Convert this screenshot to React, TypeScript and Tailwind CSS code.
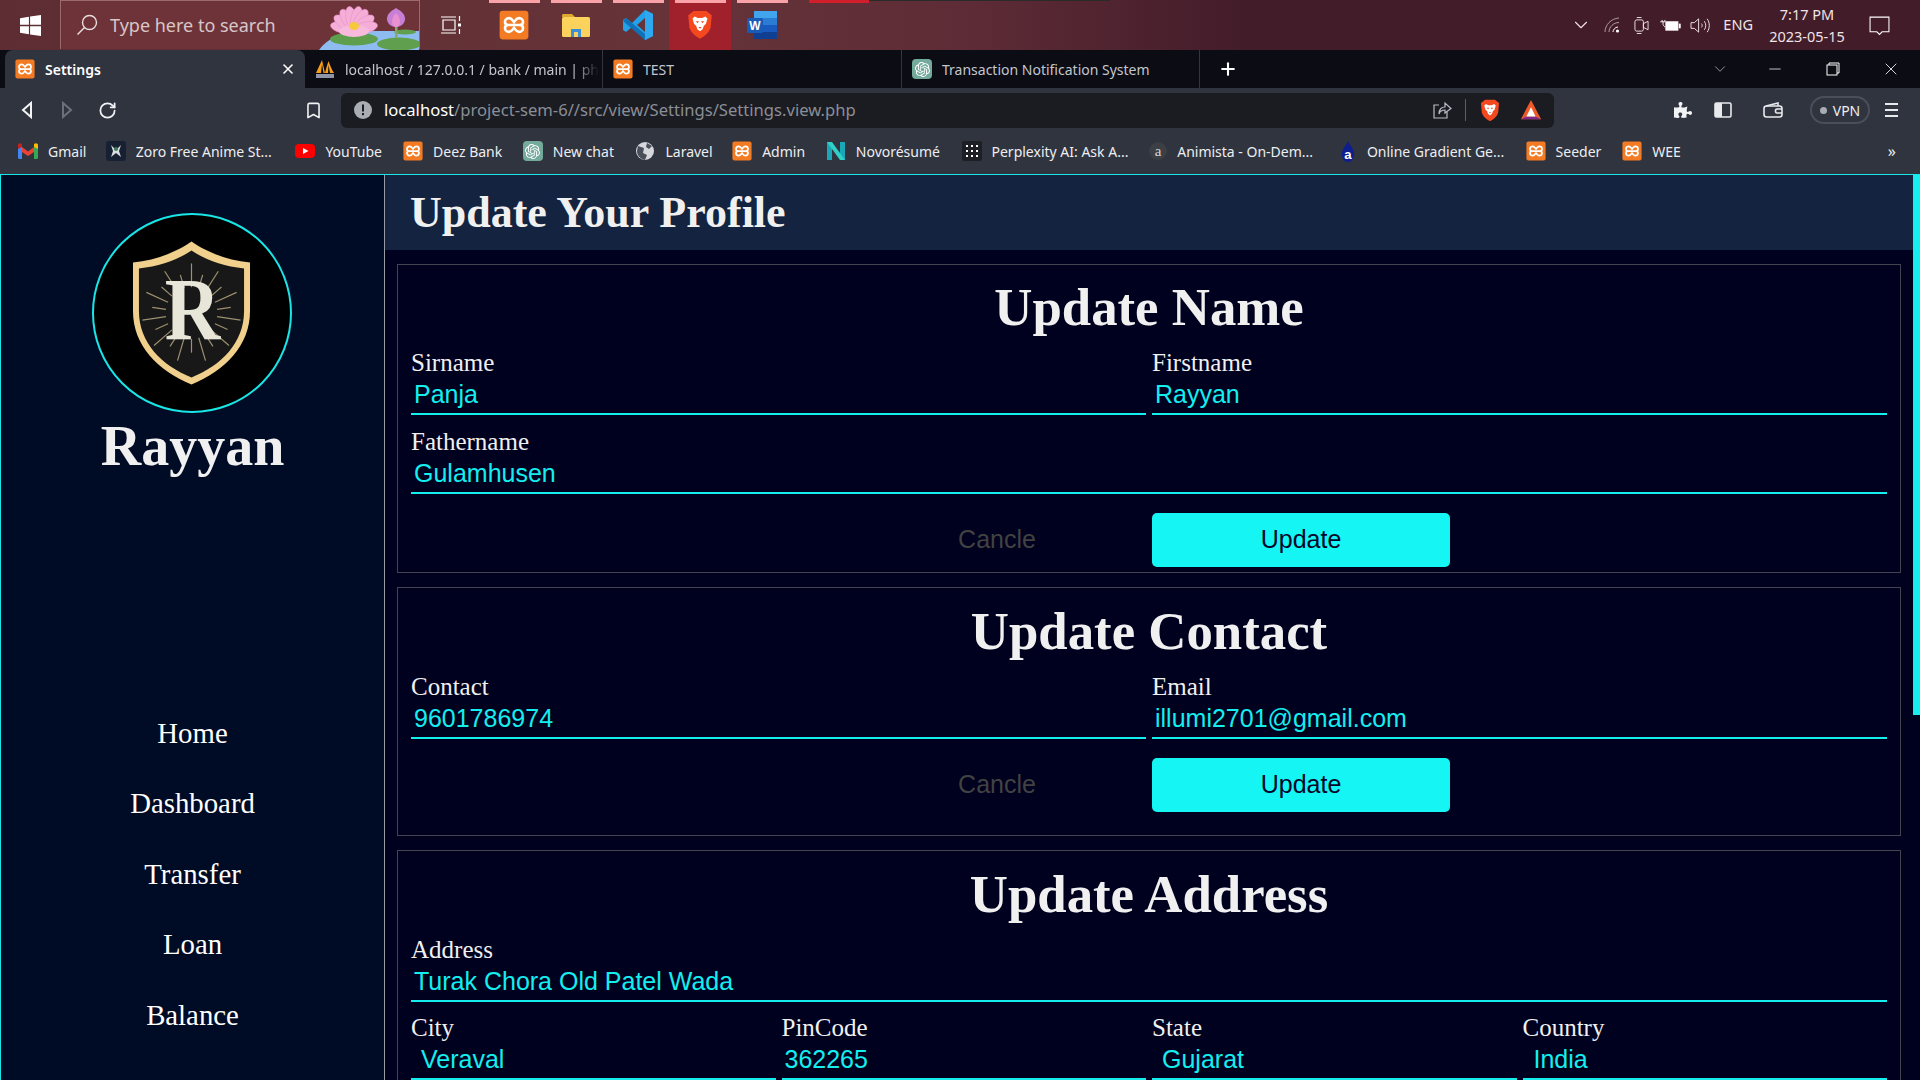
import { Bookmark, ChevronDown, Minus, Plus, RotateCw, X } from 'lucide-react';
import { SiOpenai } from 'react-icons/si';
import { FaPuzzlePiece } from 'react-icons/fa';

const Xampp = ({ size = 20 }: { size?: number }) => (
  <svg viewBox="0 0 24 24" width={size} height={size} className="shrink-0">
    <rect x="0.5" y="0.5" width="23" height="23" rx="2.5" fill="#f37b23" />
    <path
      d="M8 6.5C6 6.5 4.8 8 4.8 9.5 4.8 11 6 12 7.5 12 6 12 4.8 13 4.8 14.5 4.8 16 6 17.5 8 17.5 10 17.5 11 15.5 12 14.4 13 15.5 14 17.5 16 17.5 18 17.5 19.2 16 19.2 14.5 19.2 13 18 12 16.5 12 18 12 19.2 11 19.2 9.5 19.2 8 18 6.5 16 6.5 14 6.5 13 8.5 12 9.6 11 8.5 10 6.5 8 6.5ZM7.5 12H16.5"
      fill="none"
      stroke="#fff"
      strokeWidth="2.1"
    />
  </svg>
);

const OpenAiIcon = () => (
  <div className="flex size-[20px] shrink-0 items-center justify-center rounded-[4px] bg-[#74aa9c]">
    <SiOpenai className="size-[15px] text-white" />
  </div>
);

const BraveLion = ({ size = 24 }: { size?: number }) => (
  <svg viewBox="0 0 24 28" width={size} height={size * 1.15} className="shrink-0">
    <path d="M6 1H18L23 5 22 16C21 21 16 25 12 27 8 25 3 21 2 16L1 5Z" fill="#f4481f" />
    <path
      d="M7 6 10 7.5H14L17 6 19 8 17.5 13 15.5 15 14.5 18 12 20 9.5 18 8.5 15 6.5 13 5 8Z"
      fill="#fff"
    />
    <path d="M8 10.5H11L9.8 12.5ZM13 10.5H16L14.2 12.5ZM10.5 16H13.5L12 17.5Z" fill="#f4481f" />
  </svg>
);

const Triangle = ({ size = 22 }: { size?: number }) => (
  <svg viewBox="0 0 24 24" width={size} height={size} className="shrink-0">
    <path d="M12 1 23 22H1Z" fill="#ef5a28" />
    <path d="M1 22 7 19H17L23 22Z" fill="#7a2a8c" />
    <path d="M12 9 17 19H7Z" fill="#fff" />
  </svg>
);

const Lotus = () => {
  const petals = [-78, -55, -32, -12, 12, 32, 55, 78];
  return (
    <svg viewBox="0 0 100 49" className="h-[49px] w-[100px] shrink-0 self-end">
      <path d="M0 49C8 38 20 32 40 30H100V49Z" fill="#8fbcf0" />
      <ellipse cx="35" cy="38" rx="24" ry="6.5" fill="#5d9f4c" />
      <ellipse cx="80" cy="43" rx="22" ry="6.5" fill="#5f9f4d" />
      <ellipse cx="86" cy="31" rx="11" ry="2.5" fill="#5f9f4d" />
      <rect x="76" y="20" width="2.5" height="17" fill="#8aa66a" />
      <path d="M77 7C72 10 68 13 68 18 68 23 73 26 77 26 81 26 86 23 86 18 86 13 82 10 77 7Z" fill="#c87fd6" />
      <path d="M77 12C74 15 73 18 73 21 73 24 75 26 77 26 79 26 81 24 81 21 81 18 80 15 77 12Z" fill="#ea8fd0" />
      {petals.map((angle) => (
        <ellipse
          key={angle}
          cx="35"
          cy="17"
          rx="5.5"
          ry="12"
          fill="#f5aed8"
          stroke="#e88cc4"
          strokeWidth="0.5"
          transform={`rotate(${angle} 35 29)`}
        />
      ))}
      <ellipse cx="35" cy="30" rx="15" ry="6" fill="#f7b9dc" />
      <ellipse cx="35" cy="25" rx="5" ry="4" fill="#f6c83c" />
    </svg>
  );
};

const TaskbarIcons = [
  {
    name: 'xampp',
    icon: <Xampp size={30} />,
  },
  {
    name: 'folder',
    icon: (
      <svg viewBox="0 0 28 24" width="28" height="24">
        <path d="M0 2.5C0 1.5 .7 1 1.5 1H10L13 4H0Z" fill="#e0a82e" />
        <rect y="4" width="28" height="20" rx="1.5" fill="#fbd35c" />
        <path d="M9 24V16H19V24H16V19H12V24Z" fill="#3a8fd6" />
      </svg>
    ),
  },
  {
    name: 'vscode',
    icon: (
      <svg viewBox="0 0 30 30" width="30" height="30">
        <path d="M22 0 30 4V26L22 30 9 17 3 22 0 20V10L3 8 9 13ZM22 8 14 15 22 22Z" fill="#23a2ea" />
        <path d="M22 0 30 4V26L22 30Z" fill="#2fa8f0" />
        <path d="M3 8 22 24V30L0 11Z" fill="#0f72b8" />
      </svg>
    ),
  },
  {
    name: 'brave',
    active: true,
    icon: <BraveLion size={26} />,
  },
  {
    name: 'word',
    icon: (
      <svg viewBox="0 0 30 30" width="30" height="30">
        <rect x="7" y="1" width="23" height="28" rx="2" fill="#2b7cd3" />
        <rect x="7" y="1" width="23" height="7" fill="#41a5ee" />
        <rect x="7" y="15" width="23" height="7" fill="#185abd" />
        <rect x="7" y="22" width="23" height="7" fill="#103f91" />
        <rect y="8" width="16" height="15" rx="1.5" fill="#1a5bb8" />
        <text x="8" y="20" textAnchor="middle" fontSize="12" fontWeight="700" fill="#fff" fontFamily="Liberation Sans, sans-serif">
          W
        </text>
      </svg>
    ),
  },
];

const Taskbar = () => {
  return (
    <div className="flex h-[50px] shrink-0 bg-[linear-gradient(90deg,#5e2d33_0%,#653338_35%,#5e2c36_50%,#431c2a_65%,#431c2a_100%)] font-['Noto_Sans',sans-serif] text-[#f0e4e6]">
      <div className="flex w-[60px] items-center justify-center">
        <svg viewBox="0 0 20 20" width="21" height="21">
          <path d="M0 3 8.5 1.7V9.4H0ZM9.6 1.5 20 0V9.4H9.6ZM0 10.6H8.5V18.3L0 17ZM9.6 10.6H20V20L9.6 18.5Z" fill="#fff" />
        </svg>
      </div>
      <div className="flex h-[49px] w-[360px] items-center border border-b-0 border-[#9a6a6d] bg-[#6e3338] pl-[14px]">
        <svg viewBox="0 0 24 24" width="24" height="24" fill="none" stroke="#eadfe0" strokeWidth="1.4">
          <circle cx="14.5" cy="9.5" r="7" />
          <path d="M9.5 14.5 2.5 21.5" />
        </svg>
        <span className="ml-[11px] text-[18px] text-[#d8c6c8]">Type here to search</span>
        <div className="ml-auto">
          <Lotus />
        </div>
      </div>
      <div className="flex w-[63px] items-center justify-center pr-[2px]">
        <svg viewBox="0 0 20 20" width="20" height="20" fill="none" stroke="#fff" strokeWidth="1.2">
          <path d="M0 2H15M0 18H15M2 5H14V15H2ZM18.5 1V6M18.5 14V19" />
          <rect x="17" y="8.5" width="3" height="3" fill="#fff" stroke="none" />
        </svg>
      </div>
      {TaskbarIcons.map((item) => (
        <div key={item.name} className={`flex w-[62px] flex-col items-center ${item.active ? 'bg-[#a0212c]' : ''}`}>
          <div className="h-[3px] w-[51px] bg-[#f9a3a8]"></div>
          <div className="flex flex-1 items-center justify-center pb-[3px]">{item.icon}</div>
        </div>
      ))}
      <div className="ml-[16px] h-[3px] w-[60px] bg-[#d01f2b]"></div>
      <div className="h-[1px] w-[241px] bg-[#2a2a2a]"></div>
      <div className="ml-auto flex items-center pr-[30px]">
        <ChevronDown className="mr-[12px] size-[22px] text-[#f0e4e6]" strokeWidth={1.2} />
        <svg viewBox="0 0 16 16" width="16" height="16" fill="none" stroke="#b09a9e" strokeWidth="1" className="mr-[14px]">
          <path d="M1 15C1 8 7 1.5 15 1M5 15C5 10 9.5 5.5 15 5.5" />
          <path d="M9 15C9 13 11 10 14 10" stroke="#fff" />
          <circle cx="13.5" cy="14" r="1.6" fill="#fff" stroke="none" />
        </svg>
        <svg viewBox="0 0 16 20" width="15" height="19" fill="none" stroke="#f0e4e6" strokeWidth="1" className="mr-[11px]">
          <rect x="1" y="4" width="9" height="12" rx="2" />
          <path d="M10 8 15 5.5V14.5L10 12ZM3 1.5H8M3 18.5H8" />
        </svg>
        <svg viewBox="0 0 22 14" width="21" height="13" className="mr-[9px]">
          <path d="M0 3H5V1M2 1V3M3 3V6C3 7.5 5 7.5 5 9" fill="none" stroke="#fff" strokeWidth="1" />
          <rect x="6" y="3" width="13" height="9" fill="#fff" stroke="#fff" />
          <rect x="20" y="5" width="2" height="5" fill="#fff" />
        </svg>
        <svg viewBox="0 0 22 20" width="21" height="19" fill="none" stroke="#f0e4e6" strokeWidth="1" className="mr-[12px]">
          <path d="M1 7H4.5L9 3V17L4.5 13H1Z" />
          <path d="M12 8C13 9 13 11 12 12M15 5.5C17 8 17 12 15 14.5M18 3C21 7 21 13 18 17" />
        </svg>
        <span className="text-[14.5px]">ENG</span>
        <div className="ml-[12px] flex w-[84px] flex-col items-center text-[14.5px] leading-[22px]">
          <span>7:17 PM</span>
          <span>2023-05-15</span>
        </div>
        <svg viewBox="0 0 20 20" width="21" height="21" fill="none" stroke="#fff" strokeWidth="1" className="ml-[20px]">
          <path d="M1 2H19V16H12.5L10 18.5 7.5 16H1Z" />
        </svg>
      </div>
    </div>
  );
};

const PmaIcon = () => (
  <svg viewBox="0 0 20 20" width="20" height="20" className="shrink-0">
    <path d="M1 14C3 10 5 5 7 1 8 5 9 10 10 14ZM10 14C11 10 12 6 13.5 2 15 6 17 11 19 14Z" fill="#f89c1c" />
    <path d="M6 14 7 5 8.5 14ZM13 14 13.5 6 15 14Z" fill="#0b0c14" />
    <rect x="1" y="15" width="18" height="4" fill="#8f94a8" />
  </svg>
);

const inactiveTabs = [
  { title: 'localhost / 127.0.0.1 / bank / main | ph', icon: <PmaIcon />, width: 'w-[298px]', fade: true },
  { title: 'TEST', icon: <Xampp />, width: 'w-[299px]' },
  { title: 'Transaction Notification System', icon: <OpenAiIcon />, width: 'w-[298px]' },
];

const TabBar = () => {
  return (
    <div className="flex h-[38px] shrink-0 items-end bg-[#0b0c14] pl-[5px] font-['Noto_Sans',sans-serif] text-[14px]">
      <div className="flex h-[38px] w-[300px] items-center rounded-t-[8px] bg-[#30343f] pl-[10px] pr-[9px] font-semibold text-white">
        <Xampp />
        <span className="ml-[10px]">Settings</span>
        <X className="ml-auto size-[16px]" strokeWidth={2.4} />
      </div>
      {inactiveTabs.map((tab) => (
        <div key={tab.title} className={`flex h-[38px] items-center border-r border-[#33363f] pl-[10px] pr-[4px] text-[#c3c6ce] ${tab.width}`}>
          {tab.icon}
          <span
            className={`ml-[10px] whitespace-nowrap ${
              tab.fade ? '[mask-image:linear-gradient(90deg,#000_90%,transparent_100%)]' : ''
            }`}
          >
            {tab.title}
          </span>
        </div>
      ))}
      <div className="flex h-[38px] w-[56px] items-center justify-center">
        <Plus className="size-[20px] text-white" strokeWidth={2.5} />
      </div>
      <div className="ml-auto flex h-[38px] items-center text-white">
        <ChevronDown className="mr-[37px] size-[18px] text-[#b9bcc4]" strokeWidth={1} />
        <Minus className="mr-[42px] size-[18px]" strokeWidth={1} />
        <svg viewBox="0 0 14 14" width="14" height="14" fill="none" stroke="#fff" strokeWidth="1" className="mr-[41px]">
          <rect x="1" y="3" width="10" height="10" />
          <path d="M3 3V1H13V11H11" />
        </svg>
        <X className="mr-[19px] size-[20px]" strokeWidth={1} />
      </div>
    </div>
  );
};

const Toolbar = () => {
  return (
    <div className="flex h-[44px] shrink-0 items-center bg-[#30343f] pl-[7px] font-['Noto_Sans',sans-serif]">
      <div className="flex w-[40px] justify-center">
        <svg viewBox="0 0 14 18" width="14" height="18" fill="none" stroke="#f2f3f5" strokeWidth="2">
          <path d="M11 2 3 9 11 16Z" />
        </svg>
      </div>
      <div className="flex w-[40px] justify-center">
        <svg viewBox="0 0 14 18" width="14" height="18" fill="none" stroke="#6c7079" strokeWidth="2">
          <path d="M3 2 11 9 3 16Z" />
        </svg>
      </div>
      <div className="flex w-[40px] justify-center">
        <RotateCw className="size-[19px] text-[#f2f3f5]" strokeWidth={2.2} />
      </div>
      <div className="ml-[166px] flex w-[40px] justify-center">
        <Bookmark className="size-[19px] text-[#f2f3f5]" strokeWidth={2} />
      </div>
      <div className="ml-[8px] flex h-[35px] w-[1213px] items-center rounded-[6px] bg-[#1a1c22] pl-[13px] text-[16.6px]">
        <svg viewBox="0 0 18 18" width="18" height="18">
          <circle cx="9" cy="9" r="9" fill="#a9acb3" />
          <rect x="8" y="3.5" width="2" height="7" fill="#1a1c22" />
          <rect x="8" y="12" width="2" height="2.2" fill="#1a1c22" />
        </svg>
        <span className="ml-[12px] text-white">localhost</span>
        <span className="text-[#8b8e96]">/project-sem-6//src/view/Settings/Settings.view.php</span>
        <svg viewBox="0 0 20 20" width="20" height="20" fill="none" stroke="#b9bcc4" strokeWidth="1.2" className="ml-auto">
          <path d="M7 5H2V18H15V12" />
          <path d="M7 14C7 9 10 7 13 7V3L19 8.5 13 13V10C10 10 8 11 7 14Z" />
        </svg>
        <div className="ml-[13px] h-[22px] w-px bg-[#5c5f68]"></div>
        <div className="ml-[14px]">
          <BraveLion size={20} />
        </div>
        <div className="ml-[20px] mr-[12px]">
          <Triangle />
        </div>
      </div>
      <div className="ml-[120px] flex items-center">
        <FaPuzzlePiece className="size-[18px] text-[#f2f3f5]" />
        <svg viewBox="0 0 18 16" width="18" height="16" className="ml-[22px]">
          <rect x="1" y="1" width="16" height="14" rx="1.5" fill="none" stroke="#e8e9ec" strokeWidth="1.6" />
          <rect x="1" y="1" width="7" height="14" fill="#e8e9ec" />
        </svg>
        <svg viewBox="0 0 20 16" width="20" height="16" fill="none" stroke="#e8e9ec" strokeWidth="1.6" className="ml-[31px]">
          <path d="M3 4 15 1V4" />
          <rect x="1" y="4" width="18" height="11" rx="2.5" />
          <path d="M19 7H14C12 7 12 11 14 11H19" />
        </svg>
        <div className="ml-[27px] flex h-[28px] w-[60px] items-center justify-center gap-[6px] rounded-full border-2 border-[#4b4f5b] text-[14px] text-[#eceef2]">
          <div className="size-[7px] rounded-full bg-[#a9acb3]"></div>
          VPN
        </div>
        <div className="ml-[15px] flex w-[13px] flex-col gap-[4px]">
          <div className="h-[2px] bg-[#e8e9ec]"></div>
          <div className="h-[2px] bg-[#e8e9ec]"></div>
          <div className="h-[2px] bg-[#e8e9ec]"></div>
        </div>
      </div>
    </div>
  );
};

const bookmarks = [
  {
    name: 'Gmail',
    width: 'w-[37px]',
    icon: (
      <svg viewBox="0 0 20 16" width="20" height="16" className="shrink-0">
        <path d="M0 2 4 4V16H1.5C.7 16 0 15.3 0 14.5Z" fill="#4285f4" />
        <path d="M20 2 16 4V16H18.5C19.3 16 20 15.3 20 14.5Z" fill="#34a853" />
        <path d="M4 4 10 8.5 16 4V9L10 13 4 9Z" fill="#ea4335" />
        <path d="M0 2C0 .5 2 -.5 3.5 .7L4 1V4L0 6Z" fill="#c5221f" />
        <path d="M20 2C20 .5 18 -.5 16.5 .7L16 1V4L20 6Z" fill="#fbbc04" />
      </svg>
    ),
  },
  {
    name: 'Zoro Free Anime St...',
    width: 'w-[139px]',
    icon: (
      <svg viewBox="0 0 20 20" width="20" height="20" className="shrink-0">
        <rect width="20" height="20" rx="3" fill="#172033" />
        <path d="M5 4 10 9 15 4 13 10 15 16 10 12 5 16 7 10Z" fill="#d9dde2" />
        <circle cx="10" cy="8" r="2" fill="#3c7a55" />
      </svg>
    ),
  },
  {
    name: 'YouTube',
    width: 'w-[57px]',
    icon: (
      <svg viewBox="0 0 20 20" width="20" height="20" className="shrink-0">
        <rect y="3" width="20" height="14" rx="4" fill="#f00" />
        <path d="M8 7 13.5 10 8 13Z" fill="#fff" />
      </svg>
    ),
  },
  { name: 'Deez Bank', width: 'w-[69px]', icon: <Xampp /> },
  { name: 'New chat', width: 'w-[62px]', icon: <OpenAiIcon /> },
  {
    name: 'Laravel',
    width: 'w-[46px]',
    icon: (
      <svg viewBox="0 0 20 20" width="20" height="20" className="shrink-0">
        <circle cx="10" cy="10" r="9" fill="#d5d7dc" />
        <path d="M3 5 9 7 8 12 12 14 10 19C5 18 2 14 2 10ZM12 2 17 5 14 8 11 6Z" fill="#4a4e59" />
      </svg>
    ),
  },
  { name: 'Admin', width: 'w-[43px]', icon: <Xampp /> },
  {
    name: 'Novorésumé',
    width: 'w-[85px]',
    icon: (
      <svg viewBox="0 0 20 20" width="20" height="20" className="shrink-0">
        <path d="M1 1H6V19H1Z" fill="#1aa7b8" />
        <path d="M14 1H19V19H14Z" fill="#1aa7b8" />
        <path d="M1 1H6L19 19H14Z" fill="#2fd0c8" />
      </svg>
    ),
  },
  {
    name: 'Perplexity AI: Ask A...',
    width: 'w-[137px]',
    icon: (
      <svg viewBox="0 0 20 20" width="20" height="20" className="shrink-0">
        <rect width="20" height="20" rx="2" fill="#1d1f24" />
        {[5, 10, 15].map((y) =>
          [5, 10, 15].map((x) => <rect key={`${x}-${y}`} x={x - 1} y={y - 1} width="2" height="2" fill="#fff" />),
        )}
      </svg>
    ),
  },
  {
    name: 'Animista - On-Dem...',
    width: 'w-[141px]',
    icon: (
      <div className="flex size-[18px] shrink-0 items-center justify-center rounded-full bg-[#3c3f44] font-['Liberation_Serif',serif] text-[15px] leading-none text-[#d5d7dc]">
        a
      </div>
    ),
  },
  {
    name: 'Online Gradient Ge...',
    width: 'w-[138px]',
    icon: (
      <svg viewBox="0 0 20 24" width="18" height="21" className="shrink-0">
        <path d="M10 0C8 5 3 9 3 15 3 20 6 24 10 24 14 24 17 20 17 15 17 9 12 5 10 0Z" fill="#0d1f8f" />
        <text x="10" y="21" textAnchor="middle" fontSize="15" fontWeight="700" fill="#fff" fontFamily="Liberation Sans, sans-serif">
          a
        </text>
      </svg>
    ),
  },
  { name: 'Seeder', width: 'w-[46px]', icon: <Xampp /> },
  { name: 'WEE', width: 'w-[28px]', icon: <Xampp /> },
];

const BookmarkBar = () => {
  return (
    <div className="flex h-[43px] shrink-0 items-center gap-[20.7px] border-b border-[#19e6e6] bg-[#30343f] pb-[4px] pl-[18px] font-['Noto_Sans',sans-serif] text-[14px] text-[#eceef2]">
      {bookmarks.map((item) => (
        <div key={item.name} className="flex items-center gap-[10px]">
          {item.icon}
          <span className={`whitespace-nowrap ${item.width}`}>{item.name}</span>
        </div>
      ))}
      <span className="ml-auto pr-[24px] text-[16px] leading-none">»</span>
    </div>
  );
};

const navItems = ['Home', 'Dashboard', 'Transfer', 'Loan', 'Balance'];

const Sidebar = () => {
  return (
    <div className="flex w-[385px] shrink-0 flex-col items-center border-x border-l-[#19e6e6] border-r-[#9a9ca3] bg-[#000c26] pt-[38px] font-['Liberation_Serif',serif] text-[#f0f0f0]">
      <div className="mr-[2px] flex size-[200px] shrink-0 items-center justify-center rounded-full border-2 border-[#19e6e6] bg-black">
        <svg viewBox="0 0 120 144" width="119" height="144">
          <path
            d="M60 0C46 10 24 19 1 21V70C1 105 26 130 60 144 94 130 119 105 119 70V21C96 19 74 10 60 0Z"
            fill="#f0d08c"
          />
          <path
            d="M60 9C47 18 28 25 7 27V70C7 102 30 125 60 137 90 125 113 102 113 70V27C92 25 73 18 60 9Z"
            fill="#181818"
          />
          {Array.from({ length: 22 }).map((_, index) => (
            <line
              key={index}
              x1="60"
              y1={index % 2 === 0 ? '22' : '32'}
              x2="60"
              y2="46"
              stroke="#9e9070"
              strokeWidth="1.2"
              transform={`rotate(${(index * 360) / 22} 60 72)`}
            />
          ))}
          <text
            x="61"
            y="98"
            textAnchor="middle"
            fontSize="90"
            fontWeight="700"
            fill="#e8e6d8"
            fontFamily="Liberation Serif, serif"
            textLength="56"
            lengthAdjust="spacingAndGlyphs"
          >
            R
          </text>
        </svg>
      </div>
      <div className="mt-[1px] text-[56px] font-bold leading-[64px]">Rayyan</div>
      <div className="mt-[239px] flex flex-col items-center gap-[37.4px] text-[28.8px] leading-[33px] text-white">
        {navItems.map((item) => (
          <div key={item}>{item}</div>
        ))}
      </div>
    </div>
  );
};

const Field = ({ label, value, indent = 'pl-[3px]' }: { label: string; value: string; indent?: string }) => {
  return (
    <div className="flex flex-col">
      <label className="font-['Liberation_Serif',serif] text-[25px] leading-[27px] text-[#f0f0f0]">{label}</label>
      <div
        className={`h-[39px] border-b-2 border-[#14eeee] font-['Liberation_Sans',sans-serif] text-[25px] leading-[36px] text-[#14eeee] ${indent}`}
      >
        {value}
      </div>
    </div>
  );
};

const CardTitle = ({ title }: { title: string }) => (
  <div className="mb-[12px] text-center font-['Liberation_Serif',serif] text-[52.8px] font-bold leading-[60px] text-[#f0f0f0]">
    {title}
  </div>
);

const Actions = () => (
  <div className="mt-[19px] flex justify-center gap-[6px] font-['Liberation_Sans',sans-serif] text-[25px]">
    <button className="h-[54px] w-[298px] text-[#424242]">Cancle</button>
    <button className="h-[54px] w-[298px] rounded-[5px] bg-[#15f5f3] text-[#07072a]">Update</button>
  </div>
);

const Content = () => {
  return (
    <div className="relative flex min-w-0 flex-1 flex-col overflow-hidden bg-[#00001f]">
      <div className="flex h-[75px] shrink-0 items-center bg-[#14233f] pl-[25px] font-['Liberation_Serif',serif] text-[44px] font-bold text-[#f0f0f0]">
        Update Your Profile
      </div>
      <div className="flex w-[1516px] flex-col gap-[14px] pl-[12px] pt-[14px]">
        <div className="border border-[#444450] px-[13px] pb-[5px] pt-[12px]">
          <CardTitle title="Update Name" />
          <div className="grid grid-cols-2 gap-x-[6px] gap-y-[13px]">
            <Field label="Sirname" value="Panja" />
            <Field label="Firstname" value="Rayyan" />
            <div className="col-span-2">
              <Field label="Fathername" value="Gulamhusen" />
            </div>
          </div>
          <Actions />
        </div>
        <div className="border border-[#444450] px-[13px] pb-[23px] pt-[13px]">
          <CardTitle title="Update Contact" />
          <div className="grid grid-cols-2 gap-x-[6px]">
            <Field label="Contact" value="9601786974" />
            <Field label="Email" value="illumi2701@gmail.com" />
          </div>
          <Actions />
        </div>
        <div className="border border-[#444450] px-[13px] pt-[13px]">
          <CardTitle title="Update Address" />
          <Field label="Address" value="Turak Chora Old Patel Wada" />
          <div className="mt-[12px] grid grid-cols-4 gap-x-[6px]">
            <Field label="City" value="Veraval" indent="pl-[10px]" />
            <Field label="PinCode" value="362265" indent="pl-[3px]" />
            <Field label="State" value="Gujarat" indent="pl-[10px]" />
            <Field label="Country" value="India" indent="pl-[11px]" />
          </div>
        </div>
      </div>
      <div className="absolute right-0 top-0 h-[540px] w-[7px] bg-[#14eeee]"></div>
    </div>
  );
};

const App = () => {
  return (
    <div className="flex h-screen w-full flex-col overflow-hidden">
      <Taskbar />
      <TabBar />
      <Toolbar />
      <BookmarkBar />
      <div className="flex min-h-0 flex-1">
        <Sidebar />
        <Content />
      </div>
    </div>
  );
};

export default App;
